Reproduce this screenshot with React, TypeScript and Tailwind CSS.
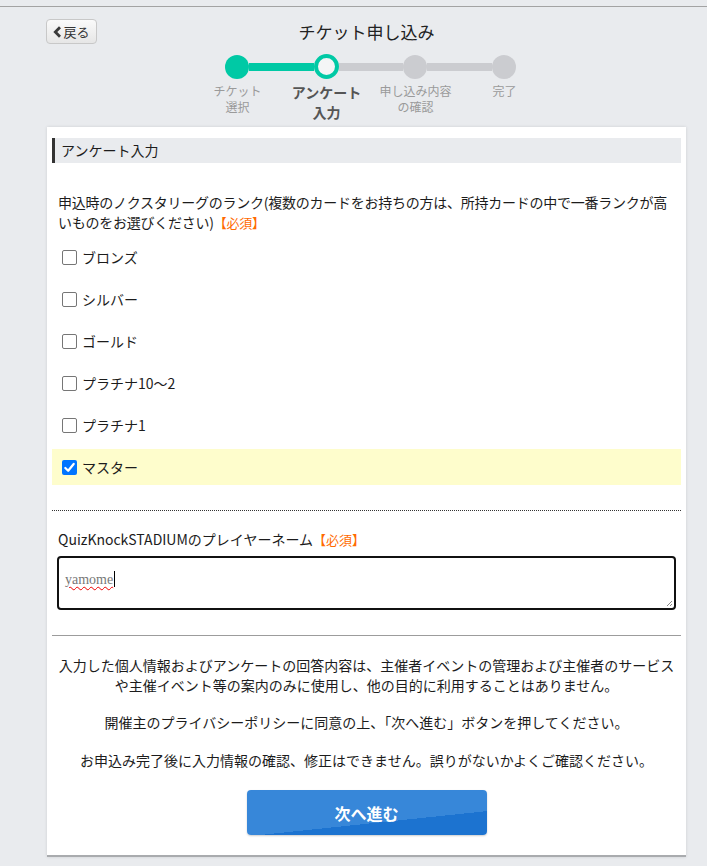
import React from 'react'

const font = "font-['Noto_Sans_CJK_JP','Noto_Sans',sans-serif]"

const ranks = ['ブロンズ', 'シルバー', 'ゴールド', 'プラチナ10〜2', 'プラチナ1', 'マスター']

function Box({ checked }: { checked: boolean }) {
  if (checked) {
    return (
      <span className="flex h-[15px] w-[15px] items-center justify-center rounded-[2px] bg-[#0075ff]">
        <svg viewBox="0 0 14 14" className="h-[13px] w-[13px]">
          <path d="M2.5 7.5 L5.6 10.5 L11.5 3.2" fill="none" stroke="#fff" strokeWidth="2.4" strokeLinecap="round" strokeLinejoin="round" />
        </svg>
      </span>
    )
  }
  return <span className="h-[15px] w-[15px] rounded-[2px] border border-[#767676] bg-white" />
}

function Steps() {
  const labels = [
    { text: ['チケット', '選択'], active: false },
    { text: ['アンケート', '入力'], active: true },
    { text: ['申し込み内容', 'の確認'], active: false },
    { text: ['完了'], active: false },
  ]
  return (
    <div className="ml-[146px] mt-[10px] w-[356px]">
      <div className="flex items-center pl-[32px]">
        <span className="h-[24px] w-[24px] rounded-full bg-[#00c9a5]" />
        <span className="h-[8px] w-[65px] bg-[#00c9a5]" />
        <span className="h-[25px] w-[25px] rounded-full border-[4px] border-[#00c9a5] bg-[#f4f5f6]" />
        <span className="h-[8px] w-[64px] bg-[#cbccd0]" />
        <span className="h-[24px] w-[24px] rounded-full bg-[#cbccd0]" />
        <span className="h-[8px] w-[65px] bg-[#cbccd0]" />
        <span className="h-[24px] w-[24px] rounded-full bg-[#cbccd0]" />
      </div>
      <div className="mt-[4px] grid grid-cols-4">
        {labels.map((l, i) => (
          <div
            key={i}
            className={
              l.active
                ? '-mt-[1px] text-center text-[14px] font-bold leading-[20px] text-[#555]'
                : 'text-center text-[12px] leading-[16px] text-[#9a9a9a]'
            }
          >
            {l.text.map((t) => (
              <div key={t}>{t}</div>
            ))}
          </div>
        ))}
      </div>
    </div>
  )
}

export default function App() {
  return (
    <div className={`min-h-screen bg-[#e9ebee] text-[#1c1c1c] ${font}`}>
      <div className="h-[6px]" />
      <div className="h-px bg-[#a3a3a3]" />

      <div className="ml-[47px] w-[639px]">
        {/* Header */}
        <div className="relative mt-[12px] flex h-[25px] items-center justify-center">
          <button className="absolute left-[-1px] top-0 flex h-[25px] w-[51px] items-center justify-center gap-[1px] rounded-[4px] border border-[#c8c8c8] bg-gradient-to-b from-[#fafafa] to-[#e6e6e6] text-[13px] text-[#333]">
            <svg viewBox="0 0 9 12" className="h-[12px] w-[9px]">
              <path d="M7 1.2 L2.3 6 L7 10.8" fill="none" stroke="#3a3a3a" strokeWidth="2.8" />
            </svg>
            戻る
          </button>
          <h1 className="text-[17px] leading-none text-[#222]">チケット申し込み</h1>
        </div>

        <Steps />

        {/* Card */}
        <div className="mt-[5px] border-b-2 border-[#a9abae] bg-white px-[5px] pb-[20px] pt-[11px] shadow-[0_0_3px_rgba(0,0,0,0.12)]">
          <div className="flex h-[25px] items-center border-l-[3px] border-[#333] bg-[#e9ebee] pl-[6px] text-[14px]">
            アンケート入力
          </div>

          <p className="mt-[29px] whitespace-nowrap px-[6px] text-[14px] leading-[20px] tracking-[-0.25px]">
            申込時のノクスタリーグのランク(複数のカードをお持ちの方は、所持カードの中で一番ランクが高
            <br />
            いものをお選びください)<span className="text-[13px] text-[#ff6a00]">【必須】</span>
          </p>

          <div>
            {ranks.map((r, i) => {
              const checked = i === ranks.length - 1
              return (
                <label
                  key={r}
                  className={`mt-[6px] flex h-[36px] items-center gap-[5px] pl-[10px] text-[14px] ${checked ? 'bg-[#fefdcc]' : ''}`}
                >
                  <Box checked={checked} />
                  <span>{r}</span>
                </label>
              )
            })}
          </div>

          <div className="mt-[25px] border-t border-dotted border-[#333]" />

          <p className="mt-[18px] px-[6px] text-[14px] leading-[20px]">
            QuizKnockSTADIUMのプレイヤーネーム<span className="text-[13px] text-[#ff6a00]">【必須】</span>
          </p>

          <div className="relative mx-[5px] mt-[6px] h-[54px] rounded-[4px] border-2 border-[#111] px-[6px] pt-[7px]">
            <span className="font-['Liberation_Serif',serif] text-[14px] text-[#777] underline decoration-[#e00] decoration-wavy decoration-1 underline-offset-2">
              yamome
            </span>
            <span className="ml-px inline-block h-[16px] w-px translate-y-[3px] bg-black" />
            <svg viewBox="0 0 8 8" className="absolute bottom-px right-px h-[8px] w-[8px]">
              <path d="M7 2 L2 7 M7 5 L5 7" stroke="#888" strokeWidth="1" />
            </svg>
          </div>

          <div className="mt-[25px] border-t border-[#9c9c9c]" />

          <div className="mt-[19px] text-center text-[14px] leading-[20px]">
            <p>
              入力した個人情報およびアンケートの回答内容は、主催者イベントの管理および主催者のサービス
              <br />
              や主催イベント等の案内のみに使用し、他の目的に利用することはありません。
            </p>
            <p className="mt-[17px]">開催主のプライバシーポリシーに同意の上、「次へ進む」ボタンを押してください。</p>
            <p className="mt-[18px]">お申込み完了後に入力情報の確認、修正はできません。誤りがないかよくご確認ください。</p>
          </div>

          <div className="mt-[20px] flex justify-center">
            <button className="h-[45px] w-[240px] rounded-[4px] bg-[linear-gradient(174deg,#3787d9_66%,#1c73d0_66%)] text-[16px] font-bold text-white shadow-[0_1px_2px_rgba(0,0,0,0.2)]">
              次へ進む
            </button>
          </div>
        </div>
      </div>
    </div>
  )
}
